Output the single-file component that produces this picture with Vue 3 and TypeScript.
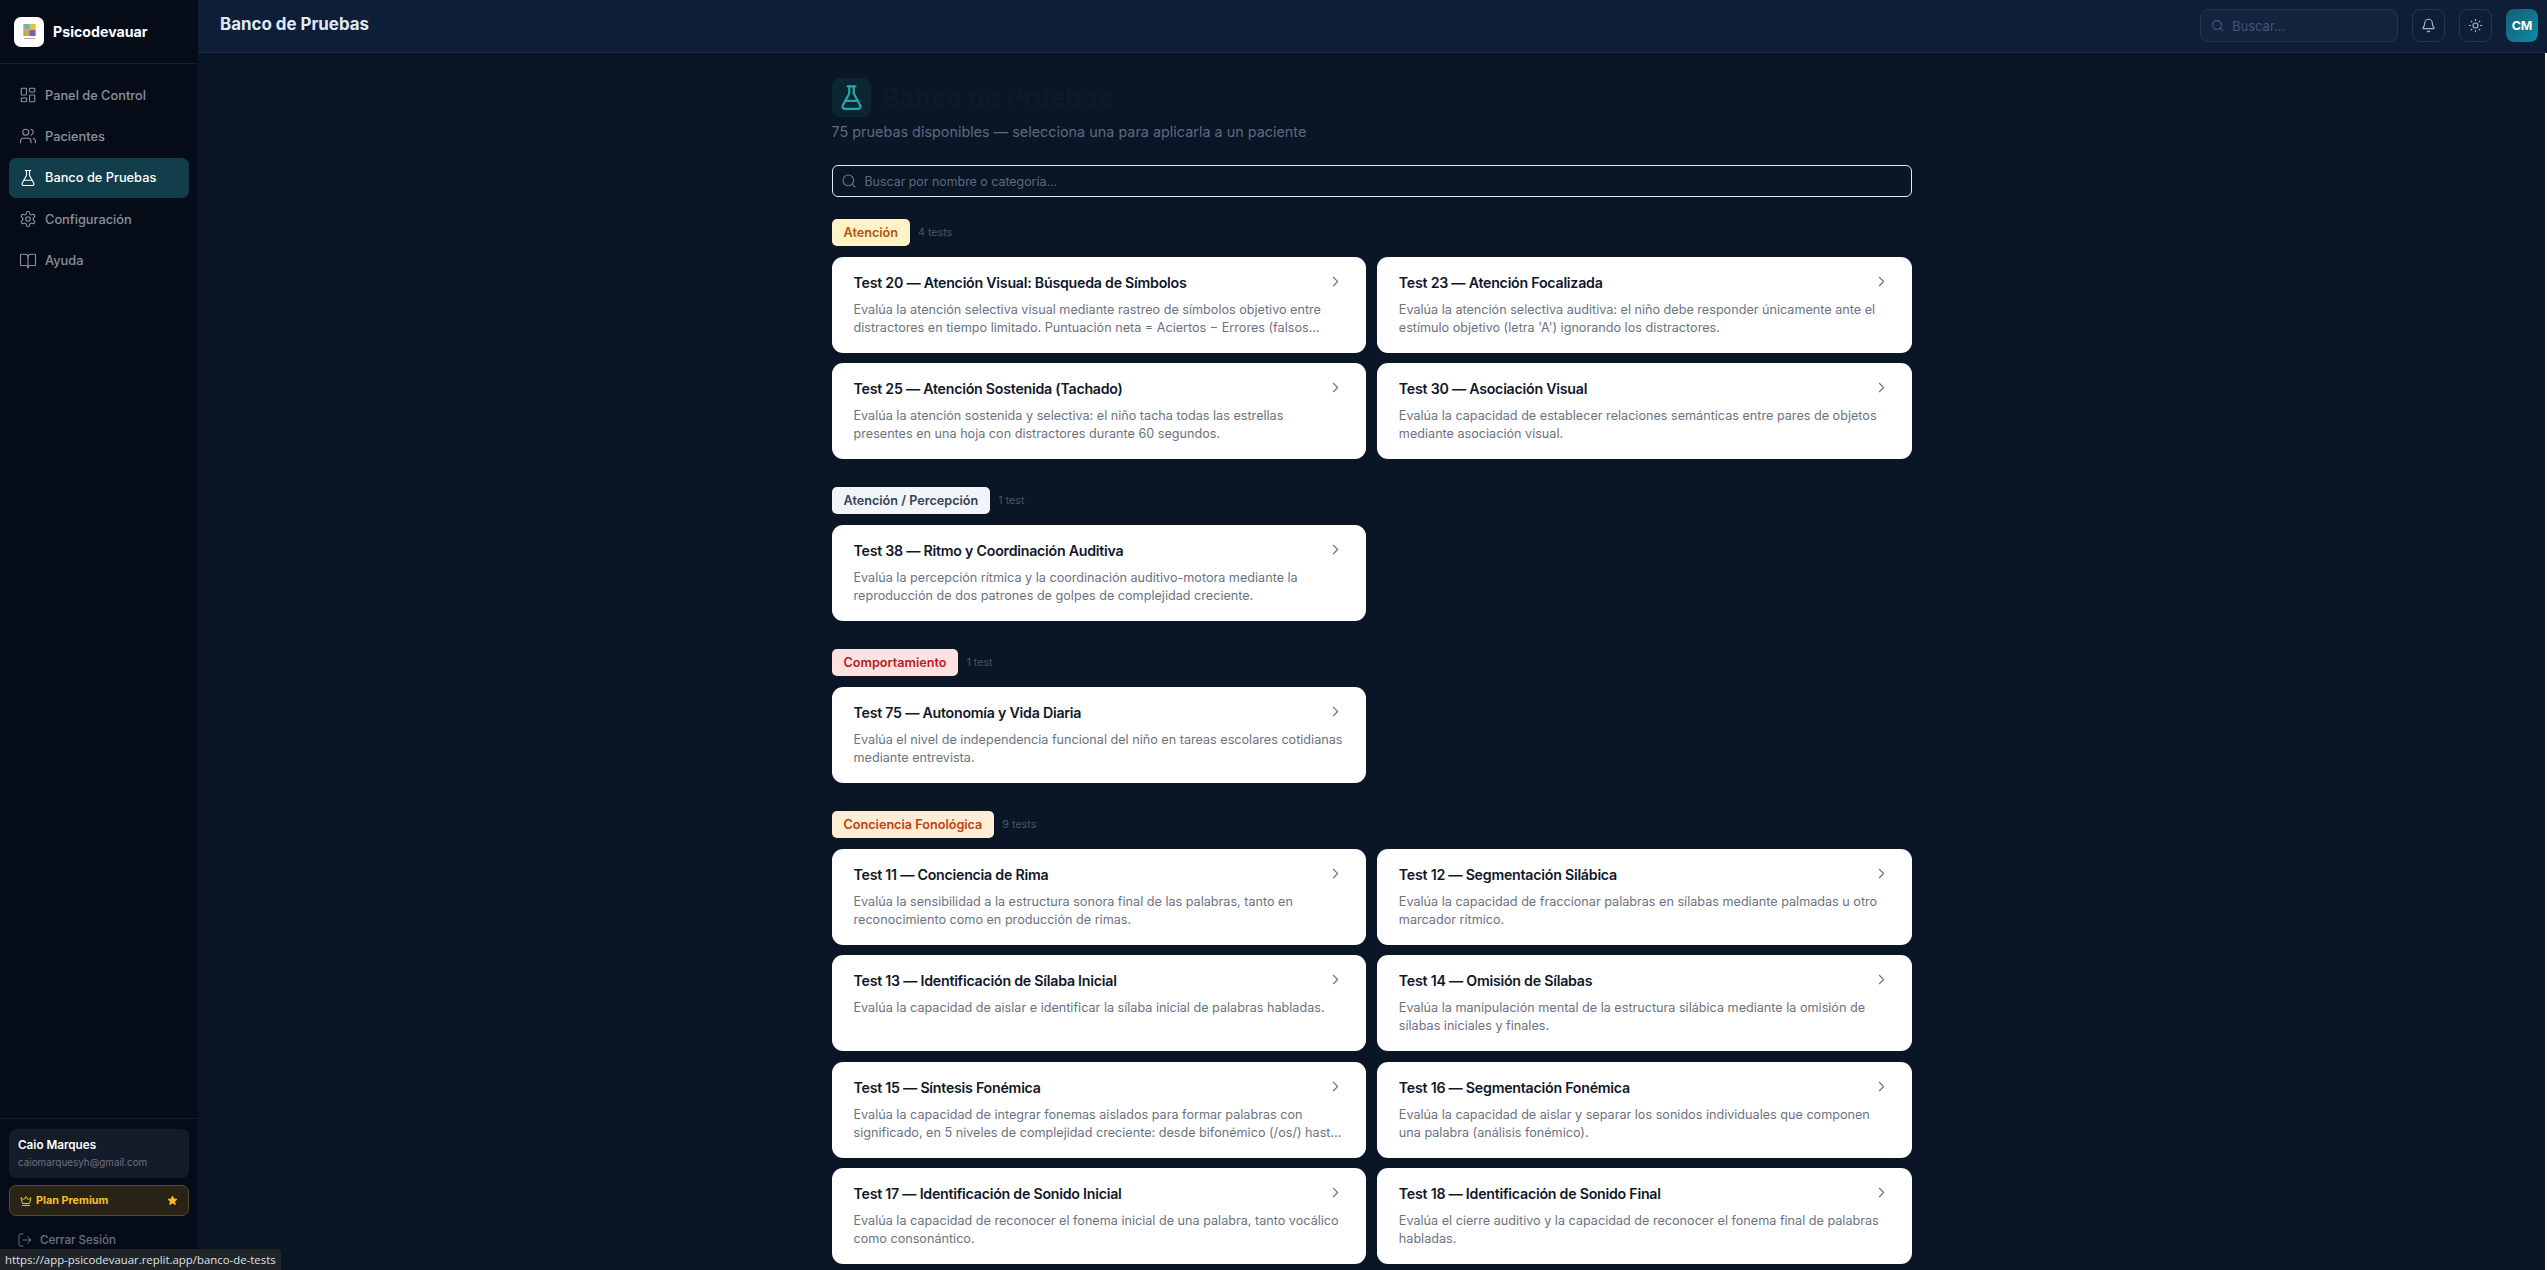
<template>
  <div class="app">
    <aside class="sidebar">
      <div class="brand">
        <div class="logo">
          <svg width="13" height="16" viewBox="0 0 13 16">
            <rect x="0.5" y="0" width="12" height="12" rx="1" fill="#d9b93b" />
            <rect x="0.5" y="0" width="6" height="5" fill="#7cb59b" />
            <rect x="7" y="0" width="5.5" height="5" fill="#e3c04a" />
            <rect x="0.5" y="6" width="6" height="6" fill="#bfae62" />
            <rect x="6.5" y="6" width="6" height="6" fill="#7a62a8" />
            <rect x="1" y="14" width="11" height="1" fill="#aab1ba" />
          </svg>
        </div>
        <span class="brand-name">Psicodevauar</span>
      </div>

      <nav class="nav">
        <a v-for="item in navItems" :key="item.label" class="nav-item" :class="{ active: item.active }">
          <svg class="nav-icon" viewBox="0 0 24 24" v-html="item.icon"></svg>
          <span>{{ item.label }}</span>
        </a>
      </nav>

      <div class="side-bottom">
        <div class="user-card">
          <div class="user-name">Caio Marques</div>
          <div class="user-mail">caiomarquesyh@gmail.com</div>
        </div>
        <div class="plan">
          <svg class="plan-crown" viewBox="0 0 24 24">
            <path d="M11.56 3.27a.5.5 0 0 1 .88 0l2.95 5.6a1 1 0 0 0 1.52.3l4.28-3.67a.5.5 0 0 1 .8.52l-2.83 10.25a1 1 0 0 1-.96.73H5.8a1 1 0 0 1-.96-.73L2.01 6.02a.5.5 0 0 1 .8-.52l4.28 3.67a1 1 0 0 0 1.52-.3z" />
            <path d="M5 21h14" />
          </svg>
          <span class="plan-label">Plan Premium</span>
          <svg class="plan-star" viewBox="0 0 24 24">
            <path d="M12 2.5l2.9 6.2 6.8.8-5 4.6 1.3 6.7-6-3.4-6 3.4 1.3-6.7-5-4.6 6.8-.8z" />
          </svg>
        </div>
        <a class="logout">
          <svg class="logout-icon" viewBox="0 0 24 24">
            <path d="M9 21H5a2 2 0 0 1-2-2V5a2 2 0 0 1 2-2h4" />
            <path d="M16 17l5-5-5-5" />
            <path d="M21 12H9" />
          </svg>
          <span>Cerrar Sesión</span>
        </a>
      </div>
    </aside>

    <div class="main">
      <header class="topbar">
        <h1 class="top-title">Banco de Pruebas</h1>
        <div class="top-search">
          <svg class="top-search-icon" viewBox="0 0 24 24">
            <circle cx="11" cy="11" r="8" />
            <path d="M21 21l-4.3-4.3" />
          </svg>
          <span>Buscar...</span>
        </div>
        <button class="icon-btn">
          <svg viewBox="0 0 24 24">
            <path d="M10.27 21a2 2 0 0 0 3.46 0" />
            <path d="M3.26 15.33A1 1 0 0 0 4 17h16a1 1 0 0 0 .74-1.67C19.41 13.96 18 12.5 18 8A6 6 0 0 0 6 8c0 4.5-1.41 5.96-2.74 7.33" />
          </svg>
        </button>
        <button class="icon-btn">
          <svg viewBox="0 0 24 24">
            <circle cx="12" cy="12" r="4" />
            <path d="M12 2v2M12 20v2M4.93 4.93l1.41 1.41M17.66 17.66l1.41 1.41M2 12h2M20 12h2M6.34 17.66l-1.41 1.41M19.07 4.93l-1.41 1.41" />
          </svg>
        </button>
        <div class="avatar">CM</div>
      </header>

      <main class="content">
        <div class="page">
          <div class="page-head">
            <div class="flask-box">
              <svg viewBox="0 0 24 24">
                <path d="M14 2v6a2 2 0 0 0 .245.96l5.51 10.08A2 2 0 0 1 18 22H6a2 2 0 0 1-1.755-2.96l5.51-10.08A2 2 0 0 0 10 8V2" />
                <path d="M6.453 15h11.094" />
                <path d="M8.5 2h7" />
              </svg>
            </div>
            <h2 class="page-title">Banco de Pruebas</h2>
          </div>
          <p class="page-sub">75 pruebas disponibles — selecciona una para aplicarla a un paciente</p>

          <div class="page-search">
            <svg viewBox="0 0 24 24">
              <circle cx="11" cy="11" r="8" />
              <path d="M21 21l-4.3-4.3" />
            </svg>
            <span>Buscar por nombre o categoría...</span>
          </div>

          <section v-for="group in groups" :key="group.name" class="group">
            <div class="group-head">
              <span class="badge" :class="group.tone">{{ group.name }}</span>
              <span class="count">{{ group.count }}</span>
            </div>
            <div class="grid">
              <article v-for="test in group.tests" :key="test.title" class="card">
                <div class="card-top">
                  <h3 class="card-title">{{ test.title }}</h3>
                  <svg class="chev" viewBox="0 0 24 24"><path d="M9 18l6-6-6-6" /></svg>
                </div>
                <p class="card-desc">{{ test.desc }}</p>
              </article>
            </div>
          </section>
        </div>
      </main>
    </div>

    <div class="status-url">https://app-psicodevauar.replit.app/banco-de-tests</div>
  </div>
</template>

<script setup lang="ts">
interface NavItem {
  label: string
  icon: string
  active?: boolean
}

interface TestItem {
  title: string
  desc: string
}

interface Group {
  name: string
  tone: string
  count: string
  tests: TestItem[]
}

const navItems: NavItem[] = [
  {
    label: 'Panel de Control',
    icon: '<rect width="7" height="9" x="3" y="3" rx="1"/><rect width="7" height="5" x="14" y="3" rx="1"/><rect width="7" height="9" x="14" y="12" rx="1"/><rect width="7" height="5" x="3" y="16" rx="1"/>',
  },
  {
    label: 'Pacientes',
    icon: '<path d="M16 21v-2a4 4 0 0 0-4-4H6a4 4 0 0 0-4 4v2"/><circle cx="9" cy="7" r="4"/><path d="M22 21v-2a4 4 0 0 0-3-3.87"/><path d="M16 3.13a4 4 0 0 1 0 7.75"/>',
  },
  {
    label: 'Banco de Pruebas',
    active: true,
    icon: '<path d="M14 2v6a2 2 0 0 0 .245.96l5.51 10.08A2 2 0 0 1 18 22H6a2 2 0 0 1-1.755-2.96l5.51-10.08A2 2 0 0 0 10 8V2"/><path d="M6.453 15h11.094"/><path d="M8.5 2h7"/>',
  },
  {
    label: 'Configuración',
    icon: '<path d="M12.22 2h-.44a2 2 0 0 0-2 2v.18a2 2 0 0 1-1 1.73l-.43.25a2 2 0 0 1-2 0l-.15-.08a2 2 0 0 0-2.73.73l-.22.38a2 2 0 0 0 .73 2.73l.15.1a2 2 0 0 1 1 1.72v.51a2 2 0 0 1-1 1.74l-.15.09a2 2 0 0 0-.73 2.73l.22.38a2 2 0 0 0 2.73.73l.15-.08a2 2 0 0 1 2 0l.43.25a2 2 0 0 1 1 1.73V20a2 2 0 0 0 2 2h.44a2 2 0 0 0 2-2v-.18a2 2 0 0 1 1-1.73l.43-.25a2 2 0 0 1 2 0l.15.08a2 2 0 0 0 2.73-.73l.22-.39a2 2 0 0 0-.73-2.73l-.15-.08a2 2 0 0 1-1-1.74v-.5a2 2 0 0 1 1-1.74l.15-.09a2 2 0 0 0 .73-2.73l-.22-.38a2 2 0 0 0-2.73-.73l-.15.08a2 2 0 0 1-2 0l-.43-.25a2 2 0 0 1-1-1.73V4a2 2 0 0 0-2-2z"/><circle cx="12" cy="12" r="3"/>',
  },
  {
    label: 'Ayuda',
    icon: '<path d="M12 7v14"/><path d="M3 18a1 1 0 0 1-1-1V4a1 1 0 0 1 1-1h5a4 4 0 0 1 4 4 4 4 0 0 1 4-4h5a1 1 0 0 1 1 1v13a1 1 0 0 1-1 1h-6a3 3 0 0 0-3 3 3 3 0 0 0-3-3z"/>',
  },
]

const groups: Group[] = [
  {
    name: 'Atención',
    tone: 'tone-amber',
    count: '4 tests',
    tests: [
      {
        title: 'Test 20 — Atención Visual: Búsqueda de Símbolos',
        desc: 'Evalúa la atención selectiva visual mediante rastreo de símbolos objetivo entre distractores en tiempo limitado. Puntuación neta = Aciertos − Errores (falsos positivos) con corrección por azar.',
      },
      {
        title: 'Test 23 — Atención Focalizada',
        desc: "Evalúa la atención selectiva auditiva: el niño debe responder únicamente ante el estímulo objetivo (letra 'A') ignorando los distractores.",
      },
      {
        title: 'Test 25 — Atención Sostenida (Tachado)',
        desc: 'Evalúa la atención sostenida y selectiva: el niño tacha todas las estrellas presentes en una hoja con distractores durante 60 segundos.',
      },
      {
        title: 'Test 30 — Asociación Visual',
        desc: 'Evalúa la capacidad de establecer relaciones semánticas entre pares de objetos mediante asociación visual.',
      },
    ],
  },
  {
    name: 'Atención / Percepción',
    tone: 'tone-slate',
    count: '1 test',
    tests: [
      {
        title: 'Test 38 — Ritmo y Coordinación Auditiva',
        desc: 'Evalúa la percepción rítmica y la coordinación auditivo-motora mediante la reproducción de dos patrones de golpes de complejidad creciente.',
      },
    ],
  },
  {
    name: 'Comportamiento',
    tone: 'tone-red',
    count: '1 test',
    tests: [
      {
        title: 'Test 75 — Autonomía y Vida Diaria',
        desc: 'Evalúa el nivel de independencia funcional del niño en tareas escolares cotidianas mediante entrevista.',
      },
    ],
  },
  {
    name: 'Conciencia Fonológica',
    tone: 'tone-orange',
    count: '9 tests',
    tests: [
      {
        title: 'Test 11 — Conciencia de Rima',
        desc: 'Evalúa la sensibilidad a la estructura sonora final de las palabras, tanto en reconocimiento como en producción de rimas.',
      },
      {
        title: 'Test 12 — Segmentación Silábica',
        desc: 'Evalúa la capacidad de fraccionar palabras en sílabas mediante palmadas u otro marcador rítmico.',
      },
      {
        title: 'Test 13 — Identificación de Sílaba Inicial',
        desc: 'Evalúa la capacidad de aislar e identificar la sílaba inicial de palabras habladas.',
      },
      {
        title: 'Test 14 — Omisión de Sílabas',
        desc: 'Evalúa la manipulación mental de la estructura silábica mediante la omisión de sílabas iniciales y finales.',
      },
      {
        title: 'Test 15 — Síntesis Fonémica',
        desc: 'Evalúa la capacidad de integrar fonemas aislados para formar palabras con significado, en 5 niveles de complejidad creciente: desde bifonémico (/os/) hasta pentafonémico con sílabas complejas.',
      },
      {
        title: 'Test 16 — Segmentación Fonémica',
        desc: 'Evalúa la capacidad de aislar y separar los sonidos individuales que componen una palabra (análisis fonémico).',
      },
      {
        title: 'Test 17 — Identificación de Sonido Inicial',
        desc: 'Evalúa la capacidad de reconocer el fonema inicial de una palabra, tanto vocálico como consonántico.',
      },
      {
        title: 'Test 18 — Identificación de Sonido Final',
        desc: 'Evalúa el cierre auditivo y la capacidad de reconocer el fonema final de palabras habladas.',
      },
    ],
  },
]
</script>

<style>
html,
body {
  margin: 0;
  height: 100%;
  overflow: hidden;
  background: #0a1526;
}
</style>

<style scoped>
.app {
  display: flex;
  height: 1270px;
  overflow: hidden;
  font-family: Inter, "Liberation Sans", sans-serif;
  color: #e2e8f0;
}

.sidebar {
  width: 198px;
  flex: none;
  display: flex;
  flex-direction: column;
  background: #050c18;
}

.brand {
  height: 64px;
  box-sizing: border-box;
  display: flex;
  align-items: center;
  gap: 9px;
  padding: 0 14px;
  border-bottom: 1px solid #161e2c;
}

.logo {
  width: 30px;
  height: 30px;
  border-radius: 7px;
  background: #fff;
  display: flex;
  align-items: center;
  justify-content: center;
}

.brand-name {
  font-size: 14.2px;
  font-weight: 700;
  color: #fff;
}

.nav {
  display: flex;
  flex-direction: column;
  gap: 1.4px;
  padding: 11px 9px;
}

.nav-item {
  height: 40px;
  display: flex;
  align-items: center;
  gap: 8px;
  padding: 0 10px;
  border-radius: 7px;
  font-size: 12.8px;
  font-weight: 500;
  color: #8a919d;
}

.nav-item.active {
  background: #123e4c;
  color: #fff;
}

.nav-icon {
  width: 18px;
  height: 18px;
  flex: none;
  fill: none;
  stroke: currentColor;
  stroke-width: 1.5;
  stroke-linecap: round;
  stroke-linejoin: round;
}

.side-bottom {
  margin-top: auto;
  border-top: 1px solid #161e2c;
  padding: 10px 9px 0;
  height: 152px;
  box-sizing: border-box;
  flex: none;
}

.user-card {
  height: 49px;
  box-sizing: border-box;
  padding: 9px 9px 0;
  border-radius: 7px;
  background: #141b29;
}

.user-name {
  font-size: 11.7px;
  line-height: 15px;
  font-weight: 600;
  color: #fff;
}

.user-mail {
  margin-top: 3px;
  font-size: 9.9px;
  line-height: 13px;
  color: #6b7280;
}

.plan {
  height: 31px;
  box-sizing: border-box;
  margin-top: 7px;
  display: flex;
  align-items: center;
  padding: 0 10px;
  border: 1px solid #5a4c28;
  border-radius: 7px;
  background: #282316;
  color: #fbbf24;
}

.plan-crown {
  width: 12px;
  height: 12px;
  margin-right: 4px;
  fill: none;
  stroke: currentColor;
  stroke-width: 2;
  stroke-linecap: round;
  stroke-linejoin: round;
}

.plan-label {
  font-size: 10.8px;
  font-weight: 700;
}

.plan-star {
  width: 11px;
  height: 11px;
  margin-left: auto;
  fill: #fbbf24;
  stroke: #fbbf24;
  stroke-width: 2;
  stroke-linejoin: round;
}

.logout {
  margin-top: 14px;
  height: 20px;
  display: flex;
  align-items: center;
  gap: 7px;
  padding-left: 8px;
  font-size: 11.6px;
  font-weight: 500;
  color: #6b7280;
}

.logout-icon {
  width: 16px;
  height: 16px;
  fill: none;
  stroke: currentColor;
  stroke-width: 1.5;
  stroke-linecap: round;
  stroke-linejoin: round;
}

.main {
  flex: 1;
  min-width: 0;
  display: flex;
  flex-direction: column;
  background: #0a1526;
}

.topbar {
  height: 53px;
  flex: none;
  box-sizing: border-box;
  display: flex;
  align-items: flex-start;
  padding: 9px 9px 0 22px;
  background: #0e1e36;
  border-bottom: 1px solid #1c2b44;
}

.top-title {
  margin: 3px auto 0 0;
  font-size: 16.9px;
  line-height: 24px;
  font-weight: 700;
  color: #dfe9f6;
}

.top-search {
  width: 198px;
  height: 33px;
  box-sizing: border-box;
  display: flex;
  align-items: center;
  gap: 8px;
  padding: 0 10px;
  border: 1px solid #26354f;
  border-radius: 8px;
  background: #14233e;
  font-size: 13px;
  color: #3f5478;
}

.top-search-icon {
  width: 13px;
  height: 13px;
  fill: none;
  stroke: #4a5d7e;
  stroke-width: 2;
  stroke-linecap: round;
}

.icon-btn {
  width: 33px;
  height: 33px;
  margin-left: 14px;
  padding: 0;
  display: flex;
  align-items: center;
  justify-content: center;
  border: 1px solid #26354f;
  border-radius: 8px;
  background: transparent;
  color: #a9b6c9;
}

.icon-btn svg {
  width: 15px;
  height: 15px;
  fill: none;
  stroke: currentColor;
  stroke-width: 1.8;
  stroke-linecap: round;
  stroke-linejoin: round;
}

.avatar {
  width: 32px;
  height: 33px;
  margin-left: 14px;
  border-radius: 8px;
  display: flex;
  align-items: center;
  justify-content: center;
  background: linear-gradient(135deg, #155e75, #0e8aa6);
  color: #fff;
  font-size: 12.4px;
  font-weight: 700;
}

.content {
  flex: 1;
  min-height: 0;
  overflow: hidden;
  display: flex;
  justify-content: center;
  border-right: 2px solid #fff;
}

.page {
  width: 1080px;
  padding-top: 25px;
}

.page-head {
  display: flex;
  align-items: center;
  gap: 12px;
}

.flask-box {
  width: 39px;
  height: 39px;
  border-radius: 8px;
  background: #0b2533;
  display: flex;
  align-items: center;
  justify-content: center;
}

.flask-box svg {
  width: 27px;
  height: 27px;
  fill: none;
  stroke: #2aa5a8;
  stroke-width: 2;
  stroke-linecap: round;
  stroke-linejoin: round;
}

.page-title {
  margin: 0;
  font-size: 26px;
  font-weight: 700;
  color: #0e1a2c;
}

.page-sub {
  margin: 4px 0 0;
  font-size: 14.4px;
  line-height: 21px;
  color: #5b6a7f;
}

.page-search {
  margin-top: 23px;
  height: 32px;
  box-sizing: border-box;
  display: flex;
  align-items: center;
  gap: 8px;
  padding: 0 8px;
  border: 1.4px solid #e6ebf2;
  border-radius: 6px;
  font-size: 12.4px;
  color: #5b6a7f;
}

.page-search svg {
  width: 16px;
  height: 16px;
  fill: none;
  stroke: #6b7a90;
  stroke-width: 1.6;
  stroke-linecap: round;
}

.group {
  margin-top: 28.4px;
}

.group:first-of-type {
  margin-top: 22px;
}

.group-head {
  display: flex;
  align-items: center;
  gap: 8px;
  margin-bottom: 10.9px;
}

.badge {
  height: 27px;
  box-sizing: border-box;
  display: flex;
  align-items: center;
  padding: 0 12px;
  border-radius: 5px;
  font-size: 12.65px;
  font-weight: 600;
}

.tone-amber {
  background: #fef3c7;
  color: #b45309;
}

.tone-slate {
  background: #f1f5f9;
  color: #334155;
}

.tone-red {
  background: #fee2e2;
  color: #b91c1c;
}

.tone-orange {
  background: #ffedd5;
  color: #c2410c;
}

.count {
  font-size: 10.7px;
  color: #475569;
}

.grid {
  display: grid;
  grid-template-columns: repeat(2, 1fr);
  gap: 10.67px;
}

.card {
  height: 95.7px;
  box-sizing: border-box;
  padding: 16px 22px 0;
  background: #fff;
  border-radius: 11px;
}

.card-top {
  display: flex;
  align-items: flex-start;
  justify-content: space-between;
}

.card-title {
  margin: 0;
  font-size: 14.2px;
  line-height: 20px;
  font-weight: 600;
  letter-spacing: -0.24px;
  color: #0f172a;
}

.chev {
  width: 17px;
  height: 17px;
  flex: none;
  fill: none;
  stroke: #667085;
  stroke-width: 1.5;
  stroke-linecap: round;
  stroke-linejoin: round;
}

.card-desc {
  margin: 8px 0 0;
  font-size: 12.63px;
  line-height: 18px;
  color: #6b7280;
  display: -webkit-box;
  -webkit-box-orient: vertical;
  -webkit-line-clamp: 2;
  overflow: hidden;
}

.status-url {
  position: fixed;
  left: 0;
  bottom: 0;
  height: 21px;
  box-sizing: border-box;
  padding: 0 5px;
  display: flex;
  align-items: center;
  background: #202429;
  border-top-right-radius: 4px;
  font-family: "Open Sans", sans-serif;
  font-size: 11.4px;
  color: #dde1e5;
}
</style>
